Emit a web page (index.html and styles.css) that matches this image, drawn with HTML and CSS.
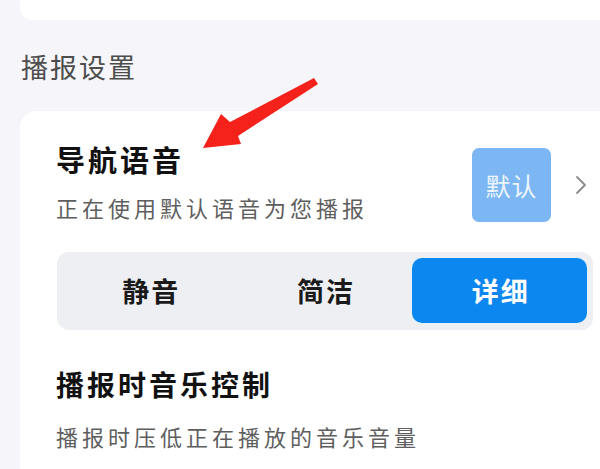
FILE: index.html
```html
<!DOCTYPE html>
<html lang="zh-CN">
<head>
    <meta charset="UTF-8">
    <meta name="viewport" content="width=device-width, initial-scale=1.0">
    <title>播报设置</title>
    <link rel="stylesheet" href="styles.css">
</head>
<body>
    <div class="top-card"></div>

    <h2 class="section-title">播报设置</h2>

    <div class="card">
        <div class="voice-row">
            <div class="voice-text">
                <div class="item-title">导航语音</div>
                <div class="item-desc">正在使用默认语音为您播报</div>
            </div>
            <div class="voice-badge">默认</div>
            <span class="chevron">
                <svg width="12" height="20" viewBox="0 0 12 20">
                    <path d="M2 2 L10 10 L2 18" fill="none" stroke="#8a8a8a" stroke-width="1.8" stroke-linecap="round" stroke-linejoin="round"/>
                </svg>
            </span>
        </div>

        <div class="segment">
            <button class="segment-item">静音</button>
            <button class="segment-item">简洁</button>
            <button class="segment-item active">详细</button>
        </div>

        <div class="item-title music-title">播报时音乐控制</div>
        <div class="item-desc music-desc">播报时压低正在播放的音乐音量</div>
    </div>

    <!-- seta vermelha por cima -->
    <svg class="red-arrow" width="125" height="80" viewBox="0 0 125 80">
        <path d="M3 73 L21 39 L30 47 L114 3 L118 9 L38 61 L41 69 Z" fill="#f4221b"/>
    </svg>
</body>
</html>
```
FILE: styles.css
```css
body {
    font-family: "Noto Sans CJK SC", "Noto Sans", sans-serif;
    margin: 0;
    background-color: #f6f6fa;
    overflow: hidden;
    position: relative;
}

.top-card {
    height: 20px;
    margin-left: 20px;
    background: #fff;
    border-bottom-left-radius: 12px;
}

.section-title {
    margin: 0;
    padding: 32px 0 0 21px;
    font-size: 27px;
    line-height: 30px;
    letter-spacing: 2px;
    font-weight: 400;
    color: #4d4d4d;
}

.card {
    margin: 29px 0 0 20px;
    background: #fff;
    border-radius: 16px 0 0 16px;
    padding: 31px 7px 30px 36px;
    height: 400px;
}

.voice-row {
    display: flex;
    align-items: flex-start;
}

.voice-text {
    flex: 1;
}

.item-title {
    font-size: 29px;
    line-height: 34px;
    letter-spacing: 3px;
    font-weight: 700;
    color: #111;
}

.item-desc {
    margin-top: 18px;
    font-size: 22px;
    line-height: 26px;
    letter-spacing: 4px;
    color: #5e5e5e;
}

.voice-badge {
    width: 79px;
    height: 74px;
    margin-top: 6px;
    background-color: #7cb7f3;
    border-radius: 7px;
    color: #eef6fd;
    font-size: 25px;
    letter-spacing: 1px;
    display: flex;
    align-items: center;
    justify-content: center;
}

.chevron {
    margin: 33px 6px 0 24px;
}

.segment {
    display: flex;
    margin: 30px 0 0 1px;
    padding: 6px 6px 7px;
    background-color: #eeeff3;
    border-radius: 12px;
}

.segment-item {
    flex: 1;
    height: 65px;
    padding: 0 0 0 2px;
    border: none;
    border-radius: 10px;
    background: transparent;
    font-family: inherit;
    font-size: 27px;
    letter-spacing: 2px;
    font-weight: 700;
    color: #1a1a1a;
}

.segment-item.active {
    background-color: #0d87f0;
    color: #fff;
    box-shadow: 0 0 0 1px #e6f3ff;
}

.music-title {
    margin-top: 37px;
    font-size: 28px;
}

.music-desc {
    margin-top: 22px;
}

.red-arrow {
    position: absolute;
    left: 200px;
    top: 75px;
}
```
